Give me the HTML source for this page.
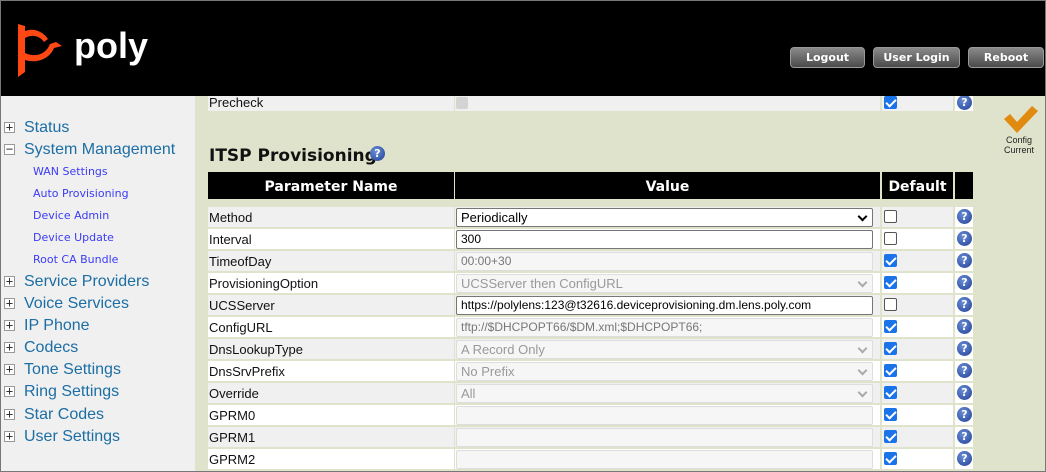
<!DOCTYPE html>
<html><head><meta charset="utf-8"><style>
*{box-sizing:border-box;margin:0;padding:0}
body{width:1046px;height:472px;overflow:hidden;background:#dfe3cc;position:relative;font-family:"Liberation Sans",sans-serif}
.frame{position:absolute;left:0;top:0;width:1046px;height:472px;border:1px solid #777;pointer-events:none;z-index:9}
.hdr{position:absolute;left:0;top:0;width:1046px;height:96px;background:#000}
.btn{position:absolute;top:47px;height:21px;border-radius:4px;background:linear-gradient(#8a8a8a,#4a4a4a);border:1px solid #999;color:#fff;font:bold 11px "DejaVu Sans",sans-serif;text-align:center;line-height:19px}
.nav{position:absolute;left:0;top:96px;width:195px;height:376px;background:#f0f0f0}
.ni{position:absolute;left:24px;font-size:16px;color:#1c6ea4;line-height:20px}
.pm{position:absolute;left:4px;width:11px;height:11px;border:1px solid #999;background:#fff;font:12px/9px "DejaVu Sans Mono",monospace;text-align:center;color:#333}
.si{position:absolute;left:33px;font:11px "DejaVu Sans",sans-serif;color:#3b3bf5;line-height:14px}
.c{position:absolute;height:20px}
.lbl{font-size:13px;line-height:22px;padding-left:1px;color:#111}
.inp{position:absolute;left:456px;width:417px;height:19px;border:1px solid #767676;border-radius:2px;background:#fff;font-size:12px;line-height:17px;padding-left:4px;color:#000}
.dis{border-color:#ddd;background:#f6f6f6;color:#777}
.sel{font-size:13px}
.arr{position:absolute;right:6px;top:4px;width:7px;height:7px;border-right:2px solid #000;border-bottom:2px solid #000;transform:rotate(45deg)}
.dis .arr{border-color:#aaa}
.cb{position:absolute;left:884px;width:13px;height:13px;border:1px solid #555;border-radius:2px;background:#fff}
.cb.on{background:#1a73e8;border-color:#1a73e8}
.cb.on::after{content:"";position:absolute;left:3px;top:0px;width:4px;height:8px;border-right:2px solid #fff;border-bottom:2px solid #fff;transform:rotate(45deg)}
.q{position:absolute;left:957px;width:15px;height:15px;border-radius:50%;background:radial-gradient(circle at 40% 35%,#6b8fd6,#1f3f95);color:#fff;font:bold 11px/15px "DejaVu Sans",sans-serif;text-align:center}
.th{position:absolute;top:172px;height:27px;background:#000;color:#fff;font:bold 14px/30px 'DejaVu Sans',sans-serif;text-align:center}
</style></head><body>
<div class="hdr">
<svg style="position:absolute;left:16px;top:22px" width="50" height="56" viewBox="0 0 50 56"><path d="M2 2 L2 55 L9 50 L9 38 C22 42 34 36 38 26 L46 24 L40 20 L34 22 C30 32 20 36 9 31 L9 16 C16 12 24 14 28 20 L32 17 C26 8 16 6 9 9 L9 4 Z" fill="#ff4713"/></svg>
<div style="position:absolute;left:74px;top:26px;font:bold 36px/40px 'Liberation Sans',sans-serif;color:#fff">poly</div>
<div class="btn" style="left:790px;width:75px">Logout</div>
<div class="btn" style="left:873px;width:87px">User Login</div>
<div class="btn" style="left:968px;width:76px">Reboot</div>
</div>
<div class="nav">
<div class="pm" style="top:26px">+</div><div class="ni" style="top:22px">Status</div>
<div class="pm" style="top:48px">−</div><div class="ni" style="top:44px">System Management</div>
<div class="si" style="top:69px">WAN Settings</div>
<div class="si" style="top:91px">Auto Provisioning</div>
<div class="si" style="top:113px">Device Admin</div>
<div class="si" style="top:135px">Device Update</div>
<div class="si" style="top:157px">Root CA Bundle</div>
<div class="pm" style="top:180px">+</div><div class="ni" style="top:176px">Service Providers</div>
<div class="pm" style="top:202px">+</div><div class="ni" style="top:198px">Voice Services</div>
<div class="pm" style="top:224px">+</div><div class="ni" style="top:220px">IP Phone</div>
<div class="pm" style="top:246px">+</div><div class="ni" style="top:242px">Codecs</div>
<div class="pm" style="top:268px">+</div><div class="ni" style="top:264px">Tone Settings</div>
<div class="pm" style="top:290px">+</div><div class="ni" style="top:286px">Ring Settings</div>
<div class="pm" style="top:313px">+</div><div class="ni" style="top:309px">Star Codes</div>
<div class="pm" style="top:335px">+</div><div class="ni" style="top:331px">User Settings</div>
</div>
<div class="c lbl" style="left:208px;top:92px;width:246px;background:#f0f0f0;height:19px;line-height:22px">Precheck</div>
<div class="c" style="left:455px;top:92px;width:425px;height:19px;background:#f0f0f0"></div>
<div style="position:absolute;left:456px;top:97px;width:12px;height:12px;background:#d4d4d4;border-radius:2px"></div>
<div class="c" style="left:882px;top:92px;width:71px;height:19px;background:#f0f0f0"></div>
<div class="cb on" style="top:96px"></div>
<div class="c" style="left:955px;top:92px;width:18px;height:19px;background:#fff"></div>
<div class="q" style="top:95px">?</div>
<div style="position:absolute;left:0;top:92px;width:1046px;height:4px;background:#000"></div>
<svg style="position:absolute;left:1002px;top:104px" width="36" height="30" viewBox="0 0 36 30"><path d="M2 15 L8 10 L15 18 L30 2 L36 7 L15 29 Z" fill="#e08a10"/></svg>
<div style="position:absolute;left:996px;top:135px;width:46px;text-align:center;font:9px/10px 'Liberation Sans',sans-serif;color:#222">Config<br>Current</div>
<div style="position:absolute;left:209px;top:146px;font:bold 17px 'DejaVu Sans',sans-serif;color:#111">ITSP Provisioning</div>
<div class="q" style="left:370px;top:146px">?</div>
<div class="th" style="left:208px;width:246px">Parameter Name</div>
<div class="th" style="left:455px;width:425px">Value</div>
<div class="th" style="left:882px;width:71px">Default</div>
<div class="th" style="left:955px;width:18px"></div>
<div id="rows">
<div class="c lbl" style="left:208px;top:207px;width:246px;background:#f0f0f0">Method</div><div class="c" style="left:455px;top:207px;width:425px;background:#f0f0f0"></div><div class="c" style="left:882px;top:207px;width:71px;background:#f0f0f0"></div><div class="c" style="left:955px;top:207px;width:18px;background:#fff"></div>
<div class="inp sel" style="top:208px">Periodically<span class="arr"></span></div><div class="cb" style="top:210px"></div><div class="q" style="top:209px">?</div>

<div class="c lbl" style="left:208px;top:229px;width:246px;background:#fff">Interval</div><div class="c" style="left:455px;top:229px;width:425px;background:#fff"></div><div class="c" style="left:882px;top:229px;width:71px;background:#fff"></div><div class="c" style="left:955px;top:229px;width:18px;background:#fff"></div>
<div class="inp" style="top:230px">300</div><div class="cb" style="top:232px"></div><div class="q" style="top:231px">?</div>

<div class="c lbl" style="left:208px;top:251px;width:246px;background:#f0f0f0">TimeofDay</div><div class="c" style="left:455px;top:251px;width:425px;background:#f0f0f0"></div><div class="c" style="left:882px;top:251px;width:71px;background:#f0f0f0"></div><div class="c" style="left:955px;top:251px;width:18px;background:#fff"></div>
<div class="inp dis" style="top:252px">00:00+30</div><div class="cb on" style="top:254px"></div><div class="q" style="top:253px">?</div>

<div class="c lbl" style="left:208px;top:273px;width:246px;background:#fff">ProvisioningOption</div><div class="c" style="left:455px;top:273px;width:425px;background:#fff"></div><div class="c" style="left:882px;top:273px;width:71px;background:#fff"></div><div class="c" style="left:955px;top:273px;width:18px;background:#fff"></div>
<div class="inp dis sel" style="top:274px;color:#999">UCSServer then ConfigURL<span class="arr"></span></div><div class="cb on" style="top:276px"></div><div class="q" style="top:275px">?</div>

<div class="c lbl" style="left:208px;top:295px;width:246px;background:#f0f0f0">UCSServer</div><div class="c" style="left:455px;top:295px;width:425px;background:#f0f0f0"></div><div class="c" style="left:882px;top:295px;width:71px;background:#f0f0f0"></div><div class="c" style="left:955px;top:295px;width:18px;background:#fff"></div>
<div class="inp" style="top:296px">https://polylens:123@t32616.deviceprovisioning.dm.lens.poly.com</div><div class="cb" style="top:298px"></div><div class="q" style="top:297px">?</div>

<div class="c lbl" style="left:208px;top:317px;width:246px;background:#fff">ConfigURL</div><div class="c" style="left:455px;top:317px;width:425px;background:#fff"></div><div class="c" style="left:882px;top:317px;width:71px;background:#fff"></div><div class="c" style="left:955px;top:317px;width:18px;background:#fff"></div>
<div class="inp dis" style="top:318px">tftp://$DHCPOPT66/$DM.xml;$DHCPOPT66;</div><div class="cb on" style="top:320px"></div><div class="q" style="top:319px">?</div>

<div class="c lbl" style="left:208px;top:339px;width:246px;background:#f0f0f0">DnsLookupType</div><div class="c" style="left:455px;top:339px;width:425px;background:#f0f0f0"></div><div class="c" style="left:882px;top:339px;width:71px;background:#f0f0f0"></div><div class="c" style="left:955px;top:339px;width:18px;background:#fff"></div>
<div class="inp dis sel" style="top:340px;color:#999">A Record Only<span class="arr"></span></div><div class="cb on" style="top:342px"></div><div class="q" style="top:341px">?</div>

<div class="c lbl" style="left:208px;top:361px;width:246px;background:#fff">DnsSrvPrefix</div><div class="c" style="left:455px;top:361px;width:425px;background:#fff"></div><div class="c" style="left:882px;top:361px;width:71px;background:#fff"></div><div class="c" style="left:955px;top:361px;width:18px;background:#fff"></div>
<div class="inp dis sel" style="top:362px;color:#999">No Prefix<span class="arr"></span></div><div class="cb on" style="top:364px"></div><div class="q" style="top:363px">?</div>

<div class="c lbl" style="left:208px;top:383px;width:246px;background:#f0f0f0">Override</div><div class="c" style="left:455px;top:383px;width:425px;background:#f0f0f0"></div><div class="c" style="left:882px;top:383px;width:71px;background:#f0f0f0"></div><div class="c" style="left:955px;top:383px;width:18px;background:#fff"></div>
<div class="inp dis sel" style="top:384px;color:#999">All<span class="arr"></span></div><div class="cb on" style="top:386px"></div><div class="q" style="top:385px">?</div>

<div class="c lbl" style="left:208px;top:405px;width:246px;background:#fff">GPRM0</div><div class="c" style="left:455px;top:405px;width:425px;background:#fff"></div><div class="c" style="left:882px;top:405px;width:71px;background:#fff"></div><div class="c" style="left:955px;top:405px;width:18px;background:#fff"></div>
<div class="inp dis" style="top:406px"></div><div class="cb on" style="top:408px"></div><div class="q" style="top:407px">?</div>

<div class="c lbl" style="left:208px;top:427px;width:246px;background:#f0f0f0">GPRM1</div><div class="c" style="left:455px;top:427px;width:425px;background:#f0f0f0"></div><div class="c" style="left:882px;top:427px;width:71px;background:#f0f0f0"></div><div class="c" style="left:955px;top:427px;width:18px;background:#fff"></div>
<div class="inp dis" style="top:428px"></div><div class="cb on" style="top:430px"></div><div class="q" style="top:429px">?</div>

<div class="c lbl" style="left:208px;top:449px;width:246px;background:#fff">GPRM2</div><div class="c" style="left:455px;top:449px;width:425px;background:#fff"></div><div class="c" style="left:882px;top:449px;width:71px;background:#fff"></div><div class="c" style="left:955px;top:449px;width:18px;background:#fff"></div>
<div class="inp dis" style="top:450px"></div><div class="cb on" style="top:452px"></div><div class="q" style="top:451px">?</div>
</div>
<div class="frame"></div>
</body></html>
